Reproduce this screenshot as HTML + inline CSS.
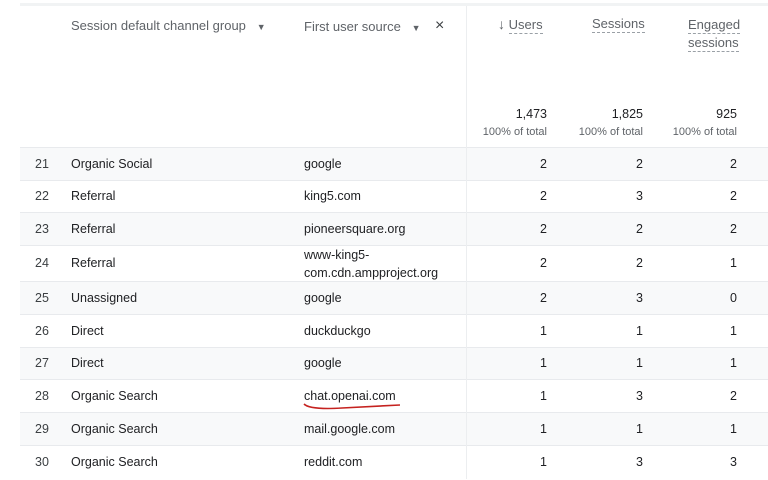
<!DOCTYPE html><html><head><style>
body{margin:0;width:768px;height:479px;background:#fff;font-family:"Liberation Sans",sans-serif;position:relative;overflow:hidden;color:#202124}
.a{position:absolute;white-space:nowrap}
.h{color:#5f6368;font-size:13px}
.r{position:absolute;left:20px;width:748px;border-top:1px solid #e8eaed}
.s{background:#f8f9fa}
.t{font-size:12.5px;line-height:16px}
.n{text-align:right;width:60px}
.u{border-bottom:1px dashed #9aa0a6;padding-bottom:1px}
</style></head><body>
<div class="a" style="left:20px;top:3px;width:748px;height:3px;background:#f1f3f4"></div>
<div class="a" style="left:466px;top:6px;width:1px;height:473px;background:#eceef0"></div>
<div class="a h" style="left:71px;top:18px">Session default channel group &nbsp;&nbsp;<span style="font-size:9px">▼</span></div>
<div class="a h" style="left:304px;top:19px">First user source &nbsp;&nbsp;<span style="font-size:9px">▼</span></div>
<div class="a h" style="left:435px;top:17px;font-size:16px;color:#3c4043">×</div>
<div class="a h" style="left:498px;top:16px"><span style="font-size:14px">↓</span> <span class="u">Users</span></div>
<div class="a h" style="left:592px;top:16px"><span class="u">Sessions</span></div>
<div class="a h" style="left:688px;top:16px;line-height:18px"><span class="u">Engaged</span><br><span class="u">sessions</span></div>
<div class="a t n" style="left:487px;top:106px">1,473</div>
<div class="a t n" style="left:583px;top:106px">1,825</div>
<div class="a t n" style="left:677px;top:106px">925</div>
<div class="a n" style="left:467px;top:126px;color:#5f6368;font-size:11px;width:80px">100% of total</div>
<div class="a n" style="left:563px;top:126px;color:#5f6368;font-size:11px;width:80px">100% of total</div>
<div class="a n" style="left:657px;top:126px;color:#5f6368;font-size:11px;width:80px">100% of total</div>

<div id="rows"></div>
<script>
var d=[[147,33,"21","Organic Social","google",2,2,2],[180,32,"22","Referral","king5.com",2,3,2],[212,33,"23","Referral","pioneersquare.org",2,2,2],[245,36,"24","Referral","www-king5-<br>com.cdn.ampproject.org",2,2,1],[281,33,"25","Unassigned","google",2,3,0],[314,33,"26","Direct","duckduckgo",1,1,1],[347,32,"27","Direct","google",1,1,1],[379,33,"28","Organic Search","chat.openai.com",1,3,2],[412,33,"29","Organic Search","mail.google.com",1,1,1],[445,34,"30","Organic Search","reddit.com",1,3,3]];
var h="";d.forEach(function(r,i){var c=r[0]+r[1]/2-8;h+='<div class="r'+(i%2==0?' s':'')+'" style="top:'+r[0]+'px;height:'+r[1]+'px"></div>';
h+='<div class="a t" style="left:35px;top:'+c+'px;color:#3c4043">'+r[2]+'</div><div class="a t" style="left:71px;top:'+c+'px">'+r[3]+'</div>';
var m=r[4].indexOf("<br>")>0;h+='<div class="a t" style="left:304px;top:'+(m?c-9:c)+'px;line-height:'+(m?18:16)+'px">'+r[4]+'</div>';
h+='<div class="a t n" style="left:487px;top:'+c+'px">'+r[5]+'</div><div class="a t n" style="left:583px;top:'+c+'px">'+r[6]+'</div><div class="a t n" style="left:677px;top:'+c+'px">'+r[7]+'</div>';});
document.getElementById("rows").innerHTML=h;
</script>
<div class="a" style="left:466px;top:147px;width:1px;height:332px;background:#eceef0"></div>
<svg class="a" style="left:302px;top:401px" width="102" height="10"><path d="M2 3 Q8 9 40 7 Q80 5 98 4" stroke="#c5221f" stroke-width="1.6" fill="none"/></svg>
</body></html>
